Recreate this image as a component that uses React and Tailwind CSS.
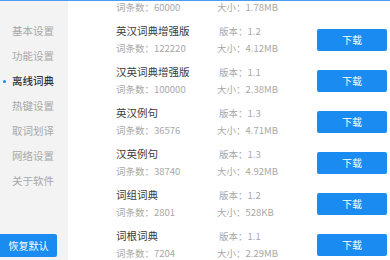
import React from "react";

const menu = ["基本设置", "功能设置", "离线词典", "热键设置", "取词划译", "网络设置", "关于软件"];

const rows = [
  { title: "", count: "60000", ver: "", size: "1.78MB", btn: false },
  { title: "英汉词典增强版", count: "122220", ver: "1.2", size: "4.12MB", btn: true },
  { title: "汉英词典增强版", count: "100000", ver: "1.1", size: "2.38MB", btn: true },
  { title: "英汉例句", count: "36576", ver: "1.3", size: "4.71MB", btn: true },
  { title: "汉英例句", count: "38740", ver: "1.3", size: "4.92MB", btn: true },
  { title: "词组词典", count: "2801", ver: "1.2", size: "528KB", btn: true },
  { title: "词根词典", count: "7204", ver: "1.1", size: "2.29MB", btn: true },
];

export default function App() {
  return (
    <div
      className="w-[390px] h-[260px] overflow-hidden bg-white flex flex-col"
      style={{ fontFamily: '"Noto Sans CJK SC", "Noto Sans", sans-serif' }}
    >
      <div className="h-[1px] bg-[#4a9ff0] shrink-0" />
      <div className="flex flex-1 min-h-0">
        <div className="w-[68px] bg-[#f3f3f3] flex flex-col shrink-0">
          <div className="pt-[18px] flex flex-col">
            {menu.map((m, i) => (
              <div key={m} className="relative h-[25px] flex items-center pl-[12px]">
                {i === 2 && (
                  <span className="absolute left-[3px] top-[11px] w-[3px] h-[3px] rounded-full bg-[#1a8bf0]" />
                )}
                <span
                  className={
                    "text-[10.5px] leading-none " +
                    (i === 2 ? "text-[#333333] font-medium" : "text-[#a8a8a8]")
                  }
                >
                  {m}
                </span>
              </div>
            ))}
          </div>
          <div className="mt-auto mb-[3px]">
            <div className="w-[57px] h-[23px] bg-[#1a8bf0] rounded-r-[2px] flex items-center justify-center text-white text-[10px]">
              恢复默认
            </div>
          </div>
        </div>
        <div className="flex-1 min-w-0 -mt-[23px]">
          {rows.map((r, i) => (
            <div key={i} className="h-[41px] flex items-center">
              <div className="w-[48px] shrink-0" />
              <div className="w-[101px] shrink-0 flex flex-col -mt-[1px]">
                <div className="text-[10.5px] leading-[14px] text-[#3a3a3a] h-[14px]">{r.title}</div>
                <div className="text-[9.5px] leading-[14px] text-[#a8a8a8] mt-[3px]">词条数：{r.count}</div>
              </div>
              <div className="w-[100px] shrink-0 flex flex-col -mt-[1px]">
                <div className="text-[9.5px] leading-[14px] text-[#a8a8a8] h-[14px] pl-[2px]">
                  {r.ver ? "版本：" + r.ver : ""}
                </div>
                <div className="text-[9.5px] leading-[14px] text-[#a8a8a8] mt-[3px]">大小：{r.size}</div>
              </div>
              {r.btn && (
                <div className="w-[70px] h-[22px] bg-[#1a8bf0] rounded-[2px] flex items-center justify-center text-white text-[10px]">
                  下载
                </div>
              )}
            </div>
          ))}
        </div>
      </div>
    </div>
  );
}
